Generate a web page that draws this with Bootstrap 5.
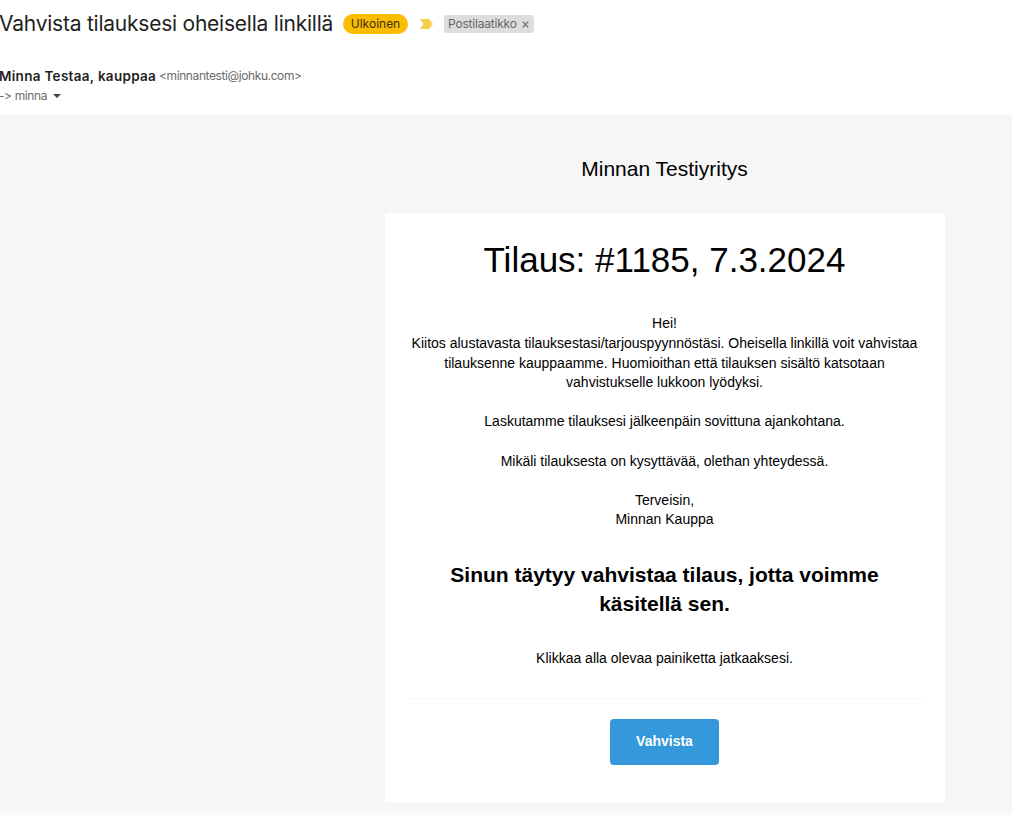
<!DOCTYPE html>
<html lang="fi">
<head>
    <meta charset="UTF-8">
    <meta name="viewport" content="width=device-width, initial-scale=1.0">
    <title>Vahvista tilauksesi oheisella linkillä</title>
    <link href="https://cdn.jsdelivr.net/npm/bootstrap@5.3.0/dist/css/bootstrap.min.css" rel="stylesheet">
    <style>
        body { font-family: Inter, "Open Sans", sans-serif; color: #1f1f1f; background: #f6f8fc; overflow: hidden; }
        .mail-head { height: 114px; padding-top: 10px; white-space: nowrap; font-variant-ligatures: none; font-feature-settings: "calt" 0; }
        .subject-row { height: 28px; }
        .subject { font-size: 21px; line-height: 28px; width: 334px; margin-left: -1px; letter-spacing: -.23px; }
        .tag-external { width: 65px; height: 20px; margin-left: 10px; background: #fbbc04; color: #3c3000; font-size: 12px; }
        .tag-arrow { margin-left: 12px; }
        .tag-inbox { width: 90px; height: 18px; margin-left: 11px; padding: 0 5px 0 4px; background: #ddd; color: #666; font-size: 12px; border-radius: 3px; letter-spacing: -.2px; }
        .sender-row { margin-top: 28px; height: 20px; line-height: 20px; }
        .sender { font-size: 13.5px; width: 157px; margin-left: -1px; letter-spacing: .3px; }
        .address { font-size: 12px; margin-left: 3px; color: #6b6b6b; letter-spacing: -.4px; }
        .to-row { height: 20px; margin-left: -1px; font-size: 12px; color: #6b6b6b; letter-spacing: -.4px; }
        .to-arrow { margin-left: 6px; }
        .mail-body { height: 697px; background: #f6f6f6; font-family: "Liberation Sans", Arial, sans-serif; color: #000; padding-left: 385px; }
        .mail-column { width: 560px; }
        .company { font-size: 21px; line-height: 30px; padding: 40px 1px 29px 0; }
        .mail-card { height: 589px; padding: 20px 23px 20px 22px; border-radius: 3px; font-size: 14px; line-height: 19.6px; }
        .mail-card h1 { font-size: 35px; line-height: 49px; margin: 2px 0 30.4px; font-weight: 400; }
        .mail-card p { margin: 0 0 19.6px; }
        .mail-card h2 { font-size: 21px; line-height: 29.4px; margin: 29.8px 0 30.4px; }
        .rule { height: 1px; background: #f6f6f6; margin: 29px -1px 20px 0; }
        .btn-confirm { width: 109px; height: 46px; padding: 0; background: #3498db; border-radius: 4px; font-size: 14px; }
    </style>
</head>
<body>
    <header class="mail-head bg-white">
        <div class="subject-row d-flex align-items-center">
            <h1 class="subject fw-normal mb-0">Vahvista tilauksesi oheisella linkillä</h1>
            <span class="tag-external rounded-pill d-flex align-items-center justify-content-center">Ulkoinen</span>
            <svg class="tag-arrow" width="13" height="10" viewBox="0 0 13 10"><path d="M0 0H9L13 5L9 10H0L3.5 5Z" fill="#f7cb4d"/></svg>
            <span class="tag-inbox d-flex align-items-center justify-content-between">Postilaatikko
                <svg width="7" height="7" viewBox="0 0 7 7"><path d="M.7.7L6.3 6.3M6.3.7L.7 6.3" stroke="#666" stroke-width="1.2"/></svg>
            </span>
        </div>
        <div class="sender-row d-flex">
            <strong class="sender fw-semibold">Minna Testaa, kauppaa</strong>
            <span class="address">&lt;minnantesti@johku.com&gt;</span>
        </div>
        <div class="to-row d-flex align-items-center">
            <span>-&gt; minna</span>
            <svg class="to-arrow" width="8" height="4" viewBox="0 0 8 4"><path d="M0 0H8L4 4Z" fill="#444"/></svg>
        </div>
    </header>
    <main class="mail-body">
        <div class="mail-column text-center">
            <div class="company">Minnan Testiyritys</div>
            <div class="mail-card bg-white">
                <h1>Tilaus: #1185, 7.3.2024</h1>
                <p>Hei!<br>Kiitos alustavasta tilauksestasi/tarjouspyynnöstäsi. Oheisella linkillä voit vahvistaa tilauksenne kauppaamme. Huomioithan että tilauksen sisältö katsotaan vahvistukselle lukkoon lyödyksi.</p>
                <p>Laskutamme tilauksesi jälkeenpäin sovittuna ajankohtana.</p>
                <p>Mikäli tilauksesta on kysyttävää, olethan yhteydessä.</p>
                <p>Terveisin,<br>Minnan Kauppa</p>
                <h2 class="fw-bold">Sinun täytyy vahvistaa tilaus, jotta voimme käsitellä sen.</h2>
                <p>Klikkaa alla olevaa painiketta jatkaaksesi.</p>
                <div class="rule"></div>
                <button type="button" class="btn btn-confirm border-0 text-white fw-bold">Vahvista</button>
            </div>
        </div>
    </main>
    <script src="https://cdn.jsdelivr.net/npm/bootstrap@5.3.0/dist/js/bootstrap.bundle.min.js"></script>
</body>
</html>
